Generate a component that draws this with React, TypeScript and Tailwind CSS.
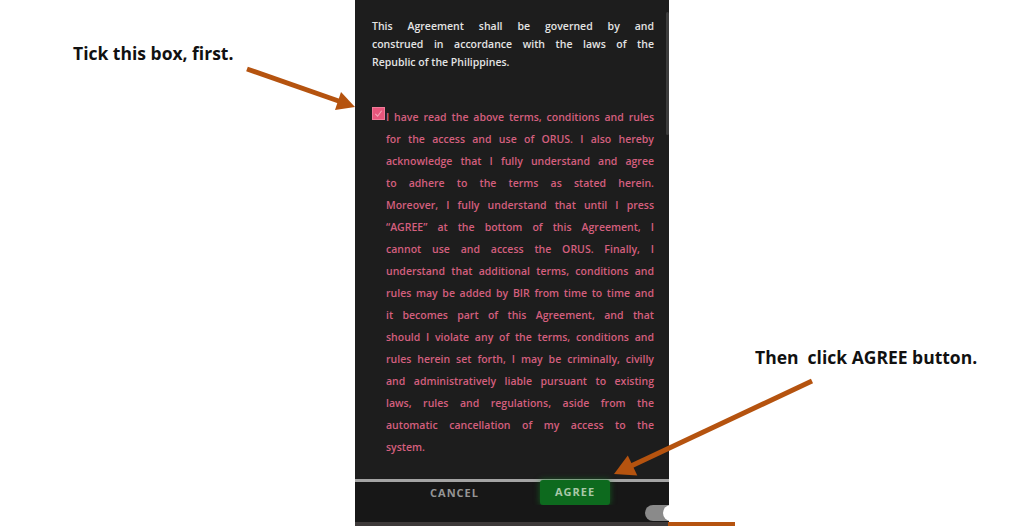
import React from "react";

const topLines = [
  "This Agreement shall be governed by and",
  "construed in accordance with the laws of the",
];
const topLast = "Republic of the Philippines.";

const pinkLines = [
  "I have read the above terms, conditions and rules",
  "for the access and use of ORUS. I also hereby",
  "acknowledge that I fully understand and agree",
  "to adhere to the terms as stated herein.",
  "Moreover, I fully understand that until I press",
  "\u201cAGREE\u201d at the bottom of this Agreement, I",
  "cannot use and access the ORUS. Finally, I",
  "understand that additional terms, conditions and",
  "rules may be added by BIR from time to time and",
  "it becomes part of this Agreement, and that",
  "should I violate any of the terms, conditions and",
  "rules herein set forth, I may be criminally, civilly",
  "and administratively liable pursuant to existing",
  "laws, rules and regulations, aside from the",
  "automatic cancellation of my access to the",
];
const pinkLast = "system.";

export default function App() {
  return (
    <div className="relative w-full h-[526px] bg-white flex overflow-hidden font-['Open_Sans',sans-serif]">
      {/* left annotation */}
      <div className="w-[355px] shrink-0 pt-[42px] pl-[73px]">
        <p className="text-[17.5px] leading-[22px] font-bold text-[#111]">
          Tick this box, first.
        </p>
      </div>

      {/* phone panel */}
      <div className="relative w-[314px] shrink-0 h-full bg-[#1d1d1d] flex flex-col">
        <div className="absolute right-0 top-[12px] w-[3px] h-[123px] rounded-full bg-[#3c3c3c]" />
        <div className="flex-1 pt-[17px] pl-[17px] pr-[15px]">
          <div className="text-[10.5px] leading-[18px] font-semibold text-[#e4e4e4]">
            {topLines.map((l) => (
              <div key={l} className="whitespace-nowrap text-justify [text-align-last:justify]">
                {l}
              </div>
            ))}
            <div className="whitespace-nowrap">{topLast}</div>
          </div>

          <div className="mt-[35px] flex">
            <div className="w-[14px] shrink-0 pt-[1px]">
              <div className="w-[13px] h-[13px] bg-[#e8567c] border border-[#f07a98] flex items-center justify-center">
                <svg width="9" height="9" viewBox="0 0 10 10">
                  <path d="M1.5 5.5 L4 8 L8.5 2" fill="none" stroke="#f6a6ba" strokeWidth="1.2" />
                </svg>
              </div>
            </div>
            <div className="flex-1 text-[10.5px] leading-[22px] font-semibold text-[#d45f7e]">
              {pinkLines.map((l) => (
                <div key={l} className="whitespace-nowrap text-justify [text-align-last:justify]">
                  {l}
                </div>
              ))}
              <div className="whitespace-nowrap">{pinkLast}</div>
            </div>
          </div>
        </div>

        <div className="h-[3px] bg-[#a4a4a4]" />
        <div className="h-[23px] flex items-center bg-[#171717]">
          <div className="ml-[73px] w-[53px] text-center text-[11px] font-bold tracking-[1px] text-[#959595]">
            CANCEL
          </div>
          <div className="ml-[59px] -mt-[2px] w-[70px] h-[25px] rounded-[3px] bg-[#0d6a1e] shadow-[0_0_6px_rgba(20,140,40,0.6)] flex items-center justify-center text-[11px] font-bold tracking-[1px] text-[#a8c8a8]">
            AGREE
          </div>
        </div>
        <div className="h-[17px] flex justify-end bg-[#171717]">
          <div className="relative w-[24px] h-[16px] rounded-l-full bg-[#8a8a8a]">
            <div className="absolute left-[18px] top-0 w-[16px] h-[16px] rounded-full bg-white" />
          </div>
        </div>
        <div className="h-[4px] bg-[#3e3a3a]" />
      </div>

      {/* right annotation */}
      <div className="flex-1 pt-[346px] pl-[86px]">
        <p className="text-[17.5px] leading-[22px] font-bold text-[#111] whitespace-pre">
          Then  click AGREE button.
        </p>
      </div>

      {/* arrows overlay */}
      <svg className="absolute inset-0 pointer-events-none" width="1024" height="526" viewBox="0 0 1024 526">
        <line x1="247" y1="69" x2="340" y2="101.5" stroke="#b5530f" strokeWidth="5" />
        <polygon points="355,107 335,110 341,92" fill="#b5530f" />
        <line x1="812" y1="381" x2="630" y2="466.5" stroke="#b5530f" strokeWidth="5" />
        <polygon points="614,474 627.8,455.5 637.3,475.6" fill="#b5530f" />
        <rect x="668" y="522" width="67" height="4" fill="#b5530f" />
      </svg>
    </div>
  );
}
